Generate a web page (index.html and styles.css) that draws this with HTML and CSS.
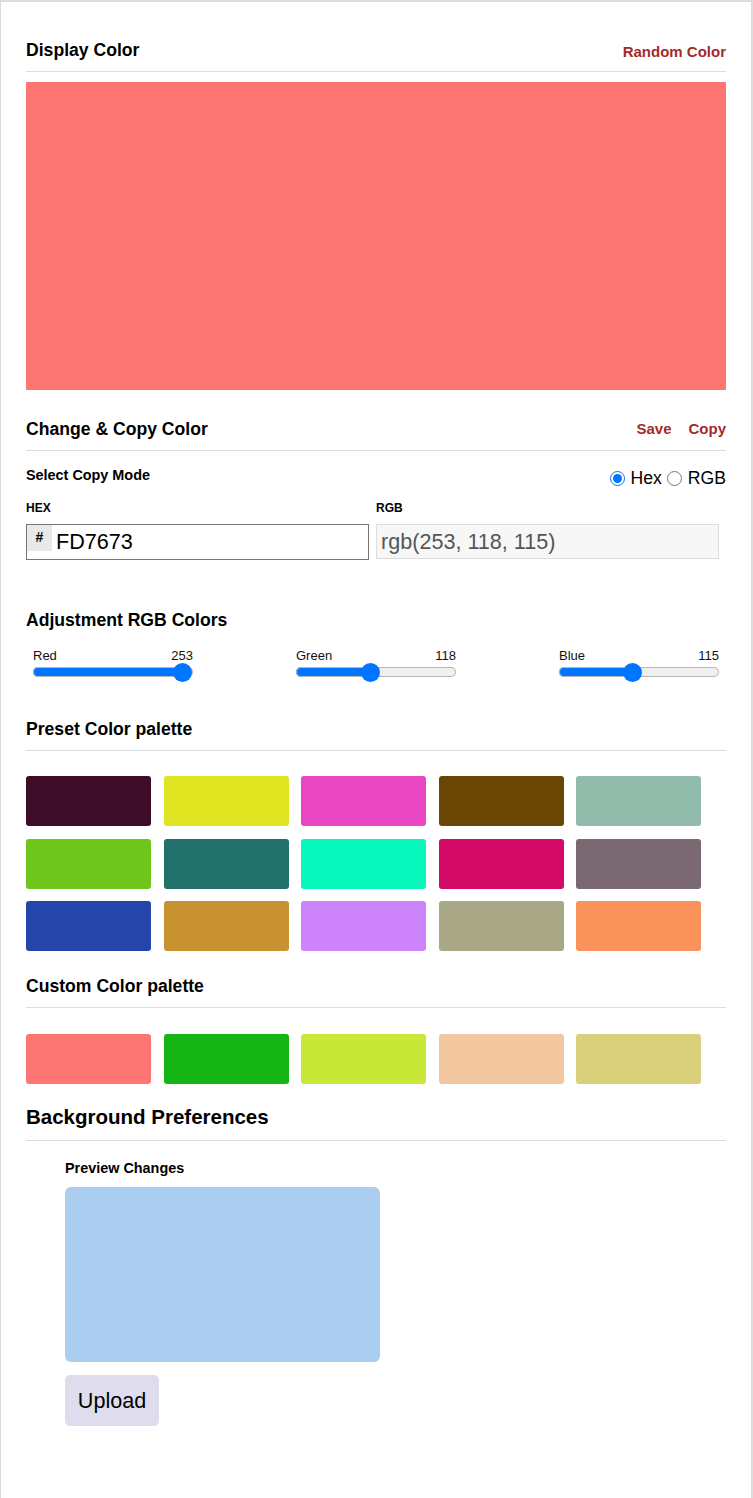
FILE: index.html
```html
<!DOCTYPE html>
<html lang="en">
<head>
<meta charset="utf-8">
<title>Color Picker</title>
<link rel="stylesheet" href="styles.css">
</head>
<body>
<main class="app">
  <div class="section-head first">
    <h2 class="title">Display Color</h2>
    <div class="actions"><a class="action">Random Color</a></div>
  </div>
  <div class="display-box"></div>

  <div class="section-head second">
    <h2 class="title">Change &amp; Copy Color</h2>
    <div class="actions"><a class="action">Save</a><a class="action">Copy</a></div>
  </div>

  <div class="mode-row">
    <span class="mode-label">Select Copy Mode</span>
    <div class="radios">
      <label class="radio"><input type="radio" name="mode" checked>Hex</label>
      <label class="radio"><input type="radio" name="mode">RGB</label>
    </div>
  </div>

  <div class="inputs">
    <div class="field">
      <div class="field-label">HEX</div>
      <div class="hex-wrap">
        <span class="hash">#</span>
        <input class="hex-input" type="text" value="FD7673">
      </div>
    </div>
    <div class="field">
      <div class="field-label">RGB</div>
      <input class="rgb-input" type="text" value="rgb(253, 118, 115)" disabled>
    </div>
  </div>

  <h2 class="title adjust-title">Adjustment RGB Colors</h2>
  <div class="sliders">
    <div class="slider">
      <div class="slider-labels"><span>Red</span><span>253</span></div>
      <input class="range" type="range" min="0" max="255" value="253" style="--p: 93.4%">
    </div>
    <div class="slider">
      <div class="slider-labels"><span>Green</span><span>118</span></div>
      <input class="range" type="range" min="0" max="255" value="118" style="--p: 46.7%">
    </div>
    <div class="slider">
      <div class="slider-labels"><span>Blue</span><span>115</span></div>
      <input class="range" type="range" min="0" max="255" value="115" style="--p: 45.7%">
    </div>
  </div>

  <div class="section-head palette-head">
    <h2 class="title">Preset Color palette</h2>
  </div>
  <div class="palette preset">
    <div class="swatch" style="background:#3d0c26"></div>
    <div class="swatch" style="background:#dfe520"></div>
    <div class="swatch" style="background:#e946c1"></div>
    <div class="swatch" style="background:#6a4605"></div>
    <div class="swatch" style="background:#91bbab"></div>
    <div class="swatch" style="background:#6ec61d"></div>
    <div class="swatch" style="background:#22706a"></div>
    <div class="swatch" style="background:#06f8bc"></div>
    <div class="swatch" style="background:#d40a67"></div>
    <div class="swatch" style="background:#7a6873"></div>
    <div class="swatch" style="background:#2645ab"></div>
    <div class="swatch" style="background:#c89231"></div>
    <div class="swatch" style="background:#cd83f9"></div>
    <div class="swatch" style="background:#a8a886"></div>
    <div class="swatch" style="background:#fa925c"></div>
  </div>

  <div class="section-head palette-head">
    <h2 class="title">Custom Color palette</h2>
  </div>
  <div class="palette custom">
    <div class="swatch" style="background:#fd7673"></div>
    <div class="swatch" style="background:#14b514"></div>
    <div class="swatch" style="background:#c8e838"></div>
    <div class="swatch" style="background:#f2c7a0"></div>
    <div class="swatch" style="background:#d8d07a"></div>
  </div>

  <div class="section-head bg-head">
    <h2 class="title big">Background Preferences</h2>
  </div>
  <div class="bg-body">
    <div class="preview-label">Preview Changes</div>
    <div class="preview-box"></div>
    <button class="upload" type="button">Upload</button>
  </div>
</main>
</body>
</html>
```

FILE: styles.css
```css
* { box-sizing: border-box; }

html, body {
  margin: 0;
  padding: 0;
  background: #ffffff;
}

body {
  font-family: "Liberation Sans", Arial, sans-serif;
  color: #000;
}

.app {
  width: 753px;
  min-height: 1498px;
  border-top: 2px solid #dddddd;
  border-left: 1px solid #dddddd;
  border-right: 2px solid #dddddd;
  padding: 0 25px 40px 25px;
}

.section-head {
  display: flex;
  justify-content: space-between;
  align-items: center;
  border-bottom: 1px solid #dddddd;
  padding-bottom: 11px;
}

.section-head.first { margin-top: 38px; }
.section-head.second { margin-top: 29px; }

.title {
  margin: 0;
  font-size: 17.6px;
  line-height: 20px;
  font-weight: bold;
}

.actions {
  display: flex;
  gap: 17px;
}

.action {
  color: #a52a2a;
  font-weight: bold;
  font-size: 15px;
  line-height: 20px;
  cursor: pointer;
}

.first .action {
  position: relative;
  top: 2px;
}

.display-box {
  margin-top: 10px;
  height: 308px;
  background: #fd7673;
}

.mode-row {
  margin-top: 14px;
  display: flex;
  justify-content: space-between;
  align-items: center;
  line-height: 20px;
}

.mode-label {
  font-size: 14.4px;
  font-weight: bold;
}

.radios {
  display: flex;
  align-items: center;
  font-size: 17.6px;
  position: relative;
  top: 3px;
}

.radio {
  display: inline-flex;
  align-items: center;
}

.radio input {
  width: 15px;
  height: 15px;
  margin: 0 6px 0 5px;
}

.inputs {
  display: flex;
  margin-top: 16px;
}

.field {
  width: 50%;
}

.field-label {
  font-size: 12px;
  font-weight: bold;
  line-height: 14px;
  margin-bottom: 9px;
}

.hex-wrap {
  width: 98%;
  height: 36px;
  border: 1px solid #767676;
  display: flex;
  align-items: stretch;
}

.hash {
  width: 25px;
  height: 26px;
  background: #ebe8e8;
  font-size: 14px;
  font-weight: bold;
  text-align: center;
  line-height: 24px;
}

.hex-input {
  flex: 1;
  min-width: 0;
  border: none;
  outline: none;
  font-family: "Liberation Sans", Arial, sans-serif;
  font-size: 21.6px;
  padding: 0 4px;
  background: transparent;
  color: #000;
}

.rgb-input {
  display: block;
  width: 98%;
  height: 35px;
  border: 1px solid #dddddd;
  background: #f7f7f7;
  font-family: "Liberation Sans", Arial, sans-serif;
  font-size: 21.6px;
  color: #555555;
  padding: 0 4px;
}

.adjust-title {
  margin-top: 50px;
}

.sliders {
  display: flex;
  justify-content: space-between;
  padding: 0 7px;
  margin-top: 18px;
}

.slider {
  width: 160px;
}

.slider-labels {
  display: flex;
  justify-content: space-between;
  font-size: 13px;
  line-height: 16px;
  color: #111;
}

.range {
  -webkit-appearance: none;
  appearance: none;
  display: block;
  width: 160px;
  height: 20px;
  margin: -2px 0 -2px 0;
  padding: 0;
  background: transparent;
}

.range::-webkit-slider-runnable-track {
  height: 10px;
  border-radius: 5px;
  background: linear-gradient(to right, #0075ff var(--p), #efefef var(--p));
  box-shadow: inset 0 0 0 1px #b5b5b5;
}

.range::-webkit-slider-thumb {
  -webkit-appearance: none;
  appearance: none;
  width: 19px;
  height: 19px;
  border-radius: 50%;
  background: #0075ff;
  margin-top: -4.5px;
  border: none;
}

.palette-head {
  margin-top: 39px;
}

.palette {
  display: grid;
  grid-template-columns: repeat(5, 125px);
  gap: 12.5px;
  margin-top: 25px;
}

.palette.custom {
  margin-top: 26px;
}

.palette + .palette-head {
  margin-top: 25px;
}

.swatch {
  height: 50px;
  border-radius: 3px;
}

.bg-head {
  margin-top: 21px;
}

.title.big {
  font-size: 20.5px;
  line-height: 24px;
}

.bg-body {
  padding-left: 39px;
}

.preview-label {
  margin-top: 19px;
  font-size: 14.4px;
  font-weight: bold;
  line-height: 16px;
}

.preview-box {
  margin-top: 11px;
  width: 315px;
  height: 175px;
  background: #abcdef;
  border-radius: 6px;
}

.upload {
  display: block;
  margin-top: 13px;
  width: 94px;
  height: 51px;
  border: none;
  border-radius: 5px;
  background: #dfdded;
  font-family: "Liberation Sans", Arial, sans-serif;
  font-size: 21.6px;
  color: #000;
  padding: 0;
}
```
